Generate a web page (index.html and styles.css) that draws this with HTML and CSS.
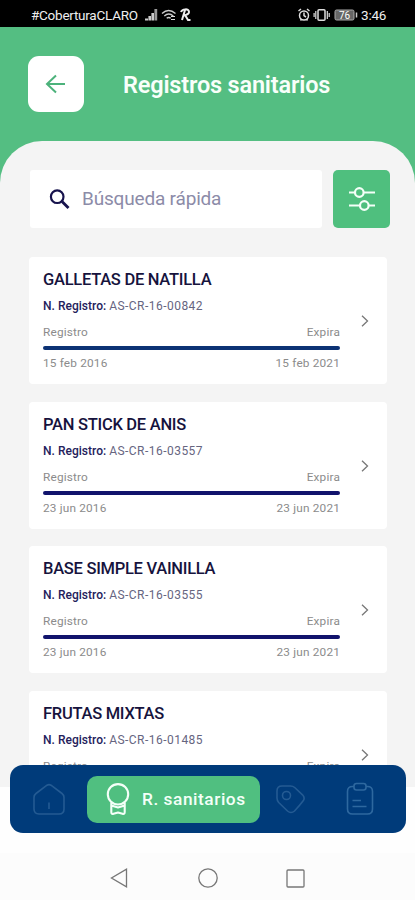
FILE: index.html
```html
<!DOCTYPE html>
<html lang="es">
<head>
<meta charset="utf-8">
<title>Registros sanitarios</title>
<link rel="stylesheet" href="styles.css">
</head>
<body>
<div class="screen">
  <div class="status">
    <span class="carrier">#CoberturaCLARO</span>
    <svg class="sig" width="48" height="14" viewBox="0 0 48 14">
      <path d="M0 12.500h3v-2H0zM3.400 12.500h2.600v-4.500h-2.600zM6.400 12.500h2.600v-7.500h-2.600z" fill="#ccc"/>
      <path d="M9.400 12.500h2.800V1H9.400z" fill="#999"/>
      <path d="M17 5.500q6.500-6 13.500 0M19.300 8q4.500-4 9 0M21.700 10.300q2-1.800 4 0" fill="none" stroke="#ccc" stroke-width="1.400"/>
      <path d="M26 8.500h4M26 11.500h4" stroke="#ddd" stroke-width="1.200"/>
      <path d="M36 4c1-3 8-4 8 0 0 2-3 3-5 3.500M40 2l-3 10M40 7l3 5h2.500" fill="none" stroke="#eee" stroke-width="2"/>
    </svg>
    <span class="gap"></span>
    <svg class="alerts" width="60" height="14" viewBox="0 0 60 14">
      <g fill="none" stroke="#ddd" stroke-width="1.500">
        <circle cx="6" cy="7.500" r="4.500"/><path d="M6 4.500v3.200l2 1.300M.5 3l2.500-2M11.500 3L9 1M2.500 12.500l1-1.500M9.500 12.500L8.500 11"/>
        <rect x="20" y="1.800" width="7" height="10.400" rx="1"/><path d="M17.800 3v8M29.300 3v8M31.200 5v4M16.100 5v4" stroke-width="1.200"/>
      </g>
      <rect x="37" y="2" width="19" height="10" rx="1.500" fill="#666" stroke="#aaa"/>
      <path d="M58.500 4.500v5" stroke="#ccc" stroke-width="1.500"/>
      <text x="46.500" y="10.800" class="batt" text-anchor="middle">76</text>
    </svg>
    <span class="clock">3:46</span>
  </div>
  <header class="header">
    <div class="back"><svg width="22" height="22" viewBox="0 0 22 22"><path d="M20 11H2M11 2.500L2 11l9 8.500" fill="none" stroke="#4cb27b" stroke-width="2"/></svg></div>
    <h1 class="title">Registros sanitarios</h1>
  </header>
  <main class="back-fill"><div class="sheet">
    <div class="tools">
      <div class="search">
        <svg width="22" height="22" viewBox="0 0 22 22"><circle cx="8.200" cy="8.700" r="6.300" fill="none" stroke="#17134d" stroke-width="2.200"/><path d="M13 13.500l6.500 6.500" stroke="#17134d" stroke-width="2.800"/></svg>
        <span class="hint">Búsqueda rápida</span>
      </div>
      <div class="filter"><svg width="28" height="26" viewBox="0 0 28 26"><g fill="none" stroke="#f4fff8" stroke-width="2.200"><path d="M1 6.500h6M16 6.500h11M1 19.500h11M21 19.500h6"/><circle cx="11.300" cy="6.500" r="4.300"/><circle cx="16.300" cy="19.500" r="4.300"/></g></svg></div>
    </div>
    <div class="list">
      <article class="card"><div class="info"><h2>GALLETAS DE NATILLA</h2><p class="num"><b>N. Registro:</b> <span>AS-CR-16-00842</span></p><div class="row"><span>Registro</span><span>Expira</span></div><div class="line light"></div><div class="row dates"><span>15 feb 2016</span><span>15 feb 2021</span></div></div><svg class="chev" width="8" height="12" viewBox="0 0 8 12"><path d="M1 .8l5.500 5.200L1 11.200"/></svg></article>
      <article class="card"><div class="info"><h2>PAN STICK DE ANIS</h2><p class="num"><b>N. Registro:</b> <span>AS-CR-16-03557</span></p><div class="row"><span>Registro</span><span>Expira</span></div><div class="line"></div><div class="row dates"><span>23 jun 2016</span><span>23 jun 2021</span></div></div><svg class="chev" width="8" height="12" viewBox="0 0 8 12"><path d="M1 .8l5.500 5.200L1 11.200"/></svg></article>
      <article class="card"><div class="info"><h2>BASE SIMPLE VAINILLA</h2><p class="num"><b>N. Registro:</b> <span>AS-CR-16-03555</span></p><div class="row"><span>Registro</span><span>Expira</span></div><div class="line"></div><div class="row dates"><span>23 jun 2016</span><span>23 jun 2021</span></div></div><svg class="chev" width="8" height="12" viewBox="0 0 8 12"><path d="M1 .8l5.500 5.200L1 11.200"/></svg></article>
      <article class="card"><div class="info"><h2>FRUTAS MIXTAS</h2><p class="num"><b>N. Registro:</b> <span>AS-CR-16-01485</span></p><div class="row"><span>Registro</span><span>Expira</span></div></div><svg class="chev" width="8" height="12" viewBox="0 0 8 12"><path d="M1 .8l5.500 5.200L1 11.200"/></svg></article>
    </div>
  </div></main>
  <nav class="tabs">
    <svg class="tab" width="32" height="34" viewBox="0 0 32 34"><path d="M3 11.500L14 3.200Q16 2 18 3.200l11 8.300Q31 13 31 15.500V27q0 5-5 5H6q-5 0-5-5V15.500Q1 13 3 11.500zM16 20.500v6.500"/></svg>
    <div class="active">
      <svg width="24" height="34" viewBox="0 0 24 34"><g fill="none" stroke="#f4fff8" stroke-width="2.100"><circle cx="12" cy="12.300" r="10.200"/><path d="M5.300 20.500V30q0 2.500 2.200 1.800L12 30.500l4.500 1.300q2.200.7 2.200-1.800v-9.500M5.300 23.500l6.700 2 6.700-2" stroke-linejoin="round"/></g></svg>
      <span class="label">R. sanitarios</span>
    </div>
    <svg class="tab tag" width="30" height="30" viewBox="0 0 30 30"><path d="M6 2H14.500q2.500 0 4.200 1.500l7.800 7.300q3 3.200.5 6.200-3.500 4.700-8.500 10-3.500 3-7 0L2.700 18.500Q1 16.500 1 14V7q0-5 5-5z"/><circle cx="10.500" cy="11.500" r="4"/></svg>
    <svg class="tab clip" width="28" height="34" viewBox="0 0 28 34"><path d="M8 4.500H6.500Q1.500 4.500 1.500 9.500V27q0 5 5 5h15q5 0 5-5V9.500q0-5-5-5H20M6.500 18.500H15M6.500 24.500h14"/><rect x="8" y="1.500" width="12" height="6.500" rx="2.500"/></svg>
  </nav>
  <footer class="system"><svg width="18" height="20" viewBox="0 0 18 20"><path d="M16.500 1.200v17.600L1.500 10z"/></svg><svg width="20" height="20" viewBox="0 0 20 20"><circle cx="10" cy="10" r="9.200"/></svg><svg width="19" height="19" viewBox="0 0 19 19"><rect x="1" y="1" width="17" height="17" rx="1"/></svg></footer>
</div>
</body>
</html>
```
FILE: styles.css
```css
* { box-sizing: border-box; margin: 0; }
body { font-family: Roboto, "Liberation Sans", sans-serif; background: #fefefe; }
svg { display: block; flex: none; }
span, h1, h2, p { white-space: nowrap; }
.screen { width: 415px; height: 900px; overflow: hidden; display: flex; flex-direction: column; }
.status { height: 27px; flex: none; background: #000; color: #eee; display: flex; align-items: center; padding: 2px 29px 0 31px; font-size: 13px; }
.carrier { width: 107px; font-size: 13.500px; letter-spacing: -.25px; }
.sig { margin-left: 7px; }
.gap { flex: 1; }
.alerts { margin-right: 3px; }
.batt { font-size: 10px; fill: #fff; }
.clock { font-size: 13.500px; width: 25px; letter-spacing: -.2px; }
.header { height: 114px; flex: none; background: #54be82; display: flex; align-items: center; padding: 0 0 0 28px; }
.back { width: 56px; height: 56px; border-radius: 11px; background: #fff; display: grid; place-items: center; }
.title { margin: 1px 0 0 39px; font-size: 23.500px; font-weight: 600; letter-spacing: -.18px; color: #f8fffa; line-height: 30px; }
.back-fill { background: linear-gradient(#54be82 80px, #fefefe 80px); height: 624px; flex: none; }
.sheet { height: 646px; background: #f4f4f4; border-radius: 42px 42px 0 0; padding: 29px 25px 0 29px; overflow: hidden; }
.tools { display: flex; justify-content: space-between; padding-left: 1px; }
.search { width: 292px; height: 58px; background: #fff; border-radius: 3px; display: flex; align-items: center; padding-left: 19px; gap: 11px; }
.hint { font-size: 19px; letter-spacing: -.18px; color: #8c8ba8; margin-top: -2px; }
.filter { width: 57px; height: 58px; border-radius: 5px; background: #4fbf7e; display: grid; place-items: center; }
.list { margin-top: 29px; display: flex; flex-direction: column; gap: 17.600px; }
.card { width: 358px; height: 127px; flex: none; background: #fff; border-radius: 4px; padding: 12px 18px 0 14px; display: flex; justify-content: space-between; }
.info { width: 297px; }
.card h2 { font-size: 16.500px; font-weight: 500; letter-spacing: -.27px; color: #16133d; line-height: 21px; }
.num { margin-top: 8px; font-size: 12px; line-height: 16px; color: #66657f; }
.num span { letter-spacing: .47px; }
.num b { font-weight: 500; color: #24215b; letter-spacing: .02px; }
.row { display: flex; justify-content: space-between; margin-top: 10px; font-size: 11.800px; letter-spacing: .18px; line-height: 16px; color: #8b8b8b; }
.line { height: 4px; margin-top: 6px; border-radius: 2px; background: #11136c; }
.line.light { background: #0c3274; }
.dates { margin-top: 5px; }
.chev { margin-top: 46px; fill: none; stroke: #777; stroke-width: 1.300; }
.tabs { width: 396px; height: 68px; flex: none; margin-left: 10px; background: #003b7a; border-radius: 13px; display: flex; align-items: center; padding-left: 23px; position: relative; }
.tab { fill: none; stroke: #245b93; stroke-width: 1.600; }
.active { width: 173px; height: 47px; border-radius: 10px; background: #50bf80; margin-left: 22px; display: flex; align-items: center; padding-left: 19px; gap: 12px; }
.label { color: #f4fff8; font-size: 17.300px; font-weight: 500; letter-spacing: .55px; }
.tag { margin-left: 16px; }
.clip { margin-left: 40px; stroke: #2e689f; }
.system { height: 47px; margin-top: 20px; background: #fcfcfc; display: flex; align-items: center; padding: 3px 0 0 110px; }
.system svg { fill: none; stroke: #777; stroke-width: 1.300; }
.system svg + svg { margin-left: 70px; }
.system svg + svg + svg { margin-left: 68px; }
```
